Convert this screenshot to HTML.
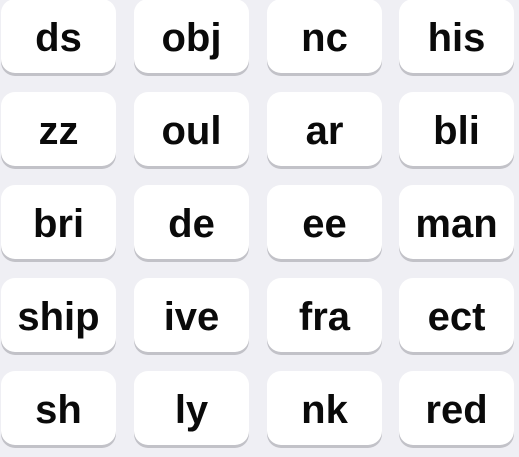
<!DOCTYPE html>
<html><head><style>
body{margin:0;width:519px;height:457px;background:#efeff4;overflow:hidden;position:relative;font-family:"Liberation Sans",Arial,sans-serif}
.t{position:absolute;width:115px;height:74px;background:#fff;border-radius:14px;box-shadow:0 3px 0 #c2c2c8;display:flex;align-items:center;justify-content:center;font-weight:bold;font-size:40px;color:#0a0a0a;padding-top:4px;box-sizing:border-box}
</style></head><body>
<div class="t" style="left:1px;top:-1px">ds</div>
<div class="t" style="left:134px;top:-1px">obj</div>
<div class="t" style="left:267px;top:-1px">nc</div>
<div class="t" style="left:399px;top:-1px">his</div>
<div class="t" style="left:1px;top:92px">zz</div>
<div class="t" style="left:134px;top:92px">oul</div>
<div class="t" style="left:267px;top:92px">ar</div>
<div class="t" style="left:399px;top:92px">bli</div>
<div class="t" style="left:1px;top:185px">bri</div>
<div class="t" style="left:134px;top:185px">de</div>
<div class="t" style="left:267px;top:185px">ee</div>
<div class="t" style="left:399px;top:185px">man</div>
<div class="t" style="left:1px;top:278px">ship</div>
<div class="t" style="left:134px;top:278px">ive</div>
<div class="t" style="left:267px;top:278px">fra</div>
<div class="t" style="left:399px;top:278px">ect</div>
<div class="t" style="left:1px;top:371px">sh</div>
<div class="t" style="left:134px;top:371px">ly</div>
<div class="t" style="left:267px;top:371px">nk</div>
<div class="t" style="left:399px;top:371px">red</div>
</body></html>
